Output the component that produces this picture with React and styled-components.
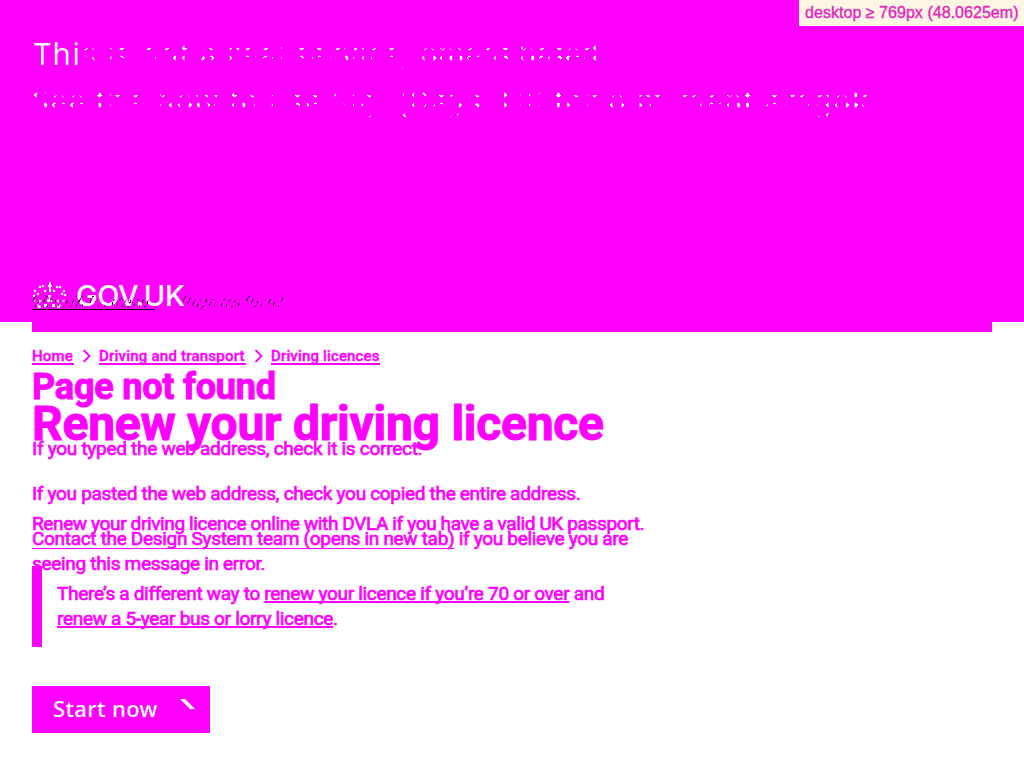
import React from 'react';
import styled, { createGlobalStyle } from 'styled-components';

const Global = createGlobalStyle`
  * { box-sizing: border-box; }
  body { margin: 0; background: #fff; color: #f0f; font-family: Roboto, "Noto Sans", sans-serif; overflow: hidden; }
`;
const Page = styled.div`
  display: grid;
  width: 1024px;
  height: 768px;
  overflow: hidden;
`;
const Layer = styled.div`
  grid-area: 1 / 1;
  min-width: 0;
`;
const Banner = styled.header`
  height: 322px;
  padding: 30px 32px 0;
  background: #f0f;
  display: flex;
  flex-direction: column;
`;
const BannerLine = styled.div`
  height: 47px;
  line-height: 47px;
  font-family: "Noto Sans", sans-serif;
  font-size: 30px;
  white-space: pre;
  letter-spacing: ${p => p.$spacing};
  color: transparent;
  background: ${p => p.$solid ? '#fff' : 'radial-gradient(ellipse 2.4px 2.6px at 50% 50%, #fff 90%, transparent) 0 3px / 9px 10px'};
  background-clip: text;
  -webkit-background-clip: text;
  width: max-content;
`;
const BannerRow = styled.div`
  display: flex;
  padding-left: 2px;
`;
const Brand = styled.div`
  display: flex;
  align-items: center;
  gap: 9px;
  height: 34px;
  margin-top: 155px;
  color: #fff;
`;
const Wordmark = styled.span`
  font: 500 29px/34px Inter, sans-serif;
  letter-spacing: -0.4px;
`;
const Strip = styled.div`
  height: 10px;
  margin: 0 32px;
  background: #f0f;
`;
const Breakpoint = styled.div`
  position: absolute;
  top: 0;
  left: 799px;
  width: 225px;
  height: 26px;
  padding-left: 6px;
  background: #fdf6e3;
  color: #e719c8;
  font: 16px/25px "Liberation Sans", sans-serif;
  letter-spacing: 0.04px;
  white-space: nowrap;
  -webkit-text-stroke: 0.4px #e030b0;
`;
const Crumbs = styled.nav`
  display: flex;
  align-items: center;
  height: 22px;
  margin: 13px 32px 0;
  font-size: 15px;
  font-weight: 500;
  -webkit-text-stroke: 0.4px #f0f;
`;
const Crumb = styled.span`
  width: ${p => p.$w}px;
  letter-spacing: ${p => p.$spacing || 0}px;
  border-bottom: 2px solid #f0f;
  height: 18px;
  line-height: 18px;
  white-space: nowrap;
`;
const Chevron = styled.svg`
  width: 9px;
  height: 14px;
  margin: 0 8px;
  flex: none;
`;
const Title = styled.h1`
  margin: ${p => p.$top}px 0 0 32px;
  font-size: ${p => p.$size}px;
  line-height: ${p => p.$line}px;
  letter-spacing: ${p => p.$spacing}px;
  font-weight: 700;
  white-space: nowrap;
  -webkit-text-stroke: 1px #f0f;
`;
const Para = styled.p`
  margin: ${p => p.$top || 0}px 0 0 32px;
  font-size: 19px;
  line-height: 25px;
  letter-spacing: ${p => p.$spacing ?? -0.31}px;
  white-space: nowrap;
  -webkit-text-stroke: 0.7px #f0f;
`;
const Link = styled.span`
  text-decoration: underline #f0f;
  text-decoration-thickness: ${p => p.$thin ? 1 : 2}px;
  text-underline-offset: ${p => p.$thin ? 3 : 1}px;
  text-decoration-skip-ink: none;
`;
const Inset = styled.section`
  width: 700px;
  height: 81px;
  margin: 30px 0 0 32px;
  padding: 15px 0 0 15px;
  border-left: 10px solid #f0f;
  p { margin-left: 0; }
`;
const Start = styled.div`
  width: 178px;
  height: 47px;
  margin: 39px 0 0 32px;
  padding-left: 21px;
  display: flex;
  align-items: center;
  background: #f0f;
  color: #fff;
  font-family: "Noto Sans", sans-serif;
  font-size: 22px;
  line-height: 30px;
  padding-bottom: 3px;
  font-weight: 500;
  letter-spacing: 0.4px;
  svg { margin: -7px 0 0 22px; }
`;
const Trail = styled.div`
  display: flex;
  gap: 27px;
  margin: 291px 0 0 32px;
  height: 19px;
  font-size: 15px;
  line-height: 22px;
  color: transparent;
  background: repeating-linear-gradient(120deg, #350035 0 1.5px, transparent 1.5px 5px);
  background-clip: text;
  -webkit-background-clip: text;
  span:first-child { width: 123px; letter-spacing: .2px; border-bottom: 1px solid #300030; }
`;

const Crown = () => (
  <svg width="35" height="29" viewBox="0 0 35 29" fill="#fff">
    <path d="M17 0h2v3h1v2h-1v5h-2V5h-1V3h1z" />
    {[[3,9],[8,5],[11,4],[25,5],[28,5],[32,9],[2,14],[6,12],[30,12],[33,13],[13,9],[22,9]].map(([x, y]) => (
      <circle key={`${x}-${y}`} cx={x} cy={y} r="1.3" />
    ))}
    <path d="M1 17l3 2-2 1zM33 17l-3 2 2 1zM7 17l3 2-3 2zM27 17l-3 2 3 2zM16 13h3l-1 4h2v3h-5v-3h2z" />
    <path d="M5 22l4 2v2H6zM29 22l-4 2v2h3zM12 22h3v3h-3zM20 22h3v3h-3z" />
  </svg>
);
const Arrow = () => <Chevron viewBox="0 0 9 14" fill="none" stroke="#f0f" strokeWidth="1.8"><path d="M1.5 1l6 6-6 6" /></Chevron>;

export default function App() {
  return (
    <>
      <Global />
      <Page>
        <Layer>
          <Banner>
            <BannerRow>
              <BannerLine $solid $spacing="1.5px">Thi</BannerLine>
              <BannerLine $spacing="1.25px">s is not a real service, </BannerLine>
              <BannerLine $spacing="-1px">omens based.</BannerLine>
            </BannerRow>
            <BannerLine $spacing="1.4px">See the how to use Sig. (Days. UK for o.m.ment amgok</BannerLine>
            <Brand><Crown /><Wordmark>GOV.UK</Wordmark></Brand>
          </Banner>
          <Strip />
          <Crumbs>
            <Crumb $w={42} $spacing={0.2}>Home</Crumb><Arrow />
            <Crumb $w={147} $spacing={0.22}>Driving and transport</Crumb><Arrow />
            <Crumb $w={109} $spacing={0.15}>Driving licences</Crumb>
          </Crumbs>
          <Title $top={32} $size={48} $line={50} $spacing={-0.27}>Renew your driving licence</Title>
          <Para $top={62} $spacing={-0.37}>Renew your driving licence online with DVLA if you have a valid UK passport.</Para>
          <Inset>
            <Para>There’s a different way to <Link>renew your licence if you’re 70 or over</Link> and</Para>
            <Para><Link>renew a 5-year bus or lorry licence</Link>.</Para>
          </Inset>
          <Start>Start now<svg width="16" height="12" viewBox="0 0 16 12"><path fill="#fff" d="M0 0h5l10 10h-5z" /></svg></Start>
        </Layer>
        <Layer>
          <Trail><span>GOV.UK Frontend</span><span>Page not found</span></Trail>
          <Title $top={57} $size={36} $line={40} $spacing={-0.2}>Page not found</Title>
          <Para $top={29} $spacing={-0.28}>If you typed the web address, check it is correct.</Para>
          <Para $top={20}>If you pasted the web address, check you copied the entire address.</Para>
          <Para $top={20}><Link $thin>Contact the Design System team (opens in new tab)</Link> if you believe you are</Para>
          <Para>seeing this message in error.</Para>
        </Layer>
      </Page>
      <Breakpoint>desktop ≥ 769px (48.0625em)</Breakpoint>
    </>
  );
}
